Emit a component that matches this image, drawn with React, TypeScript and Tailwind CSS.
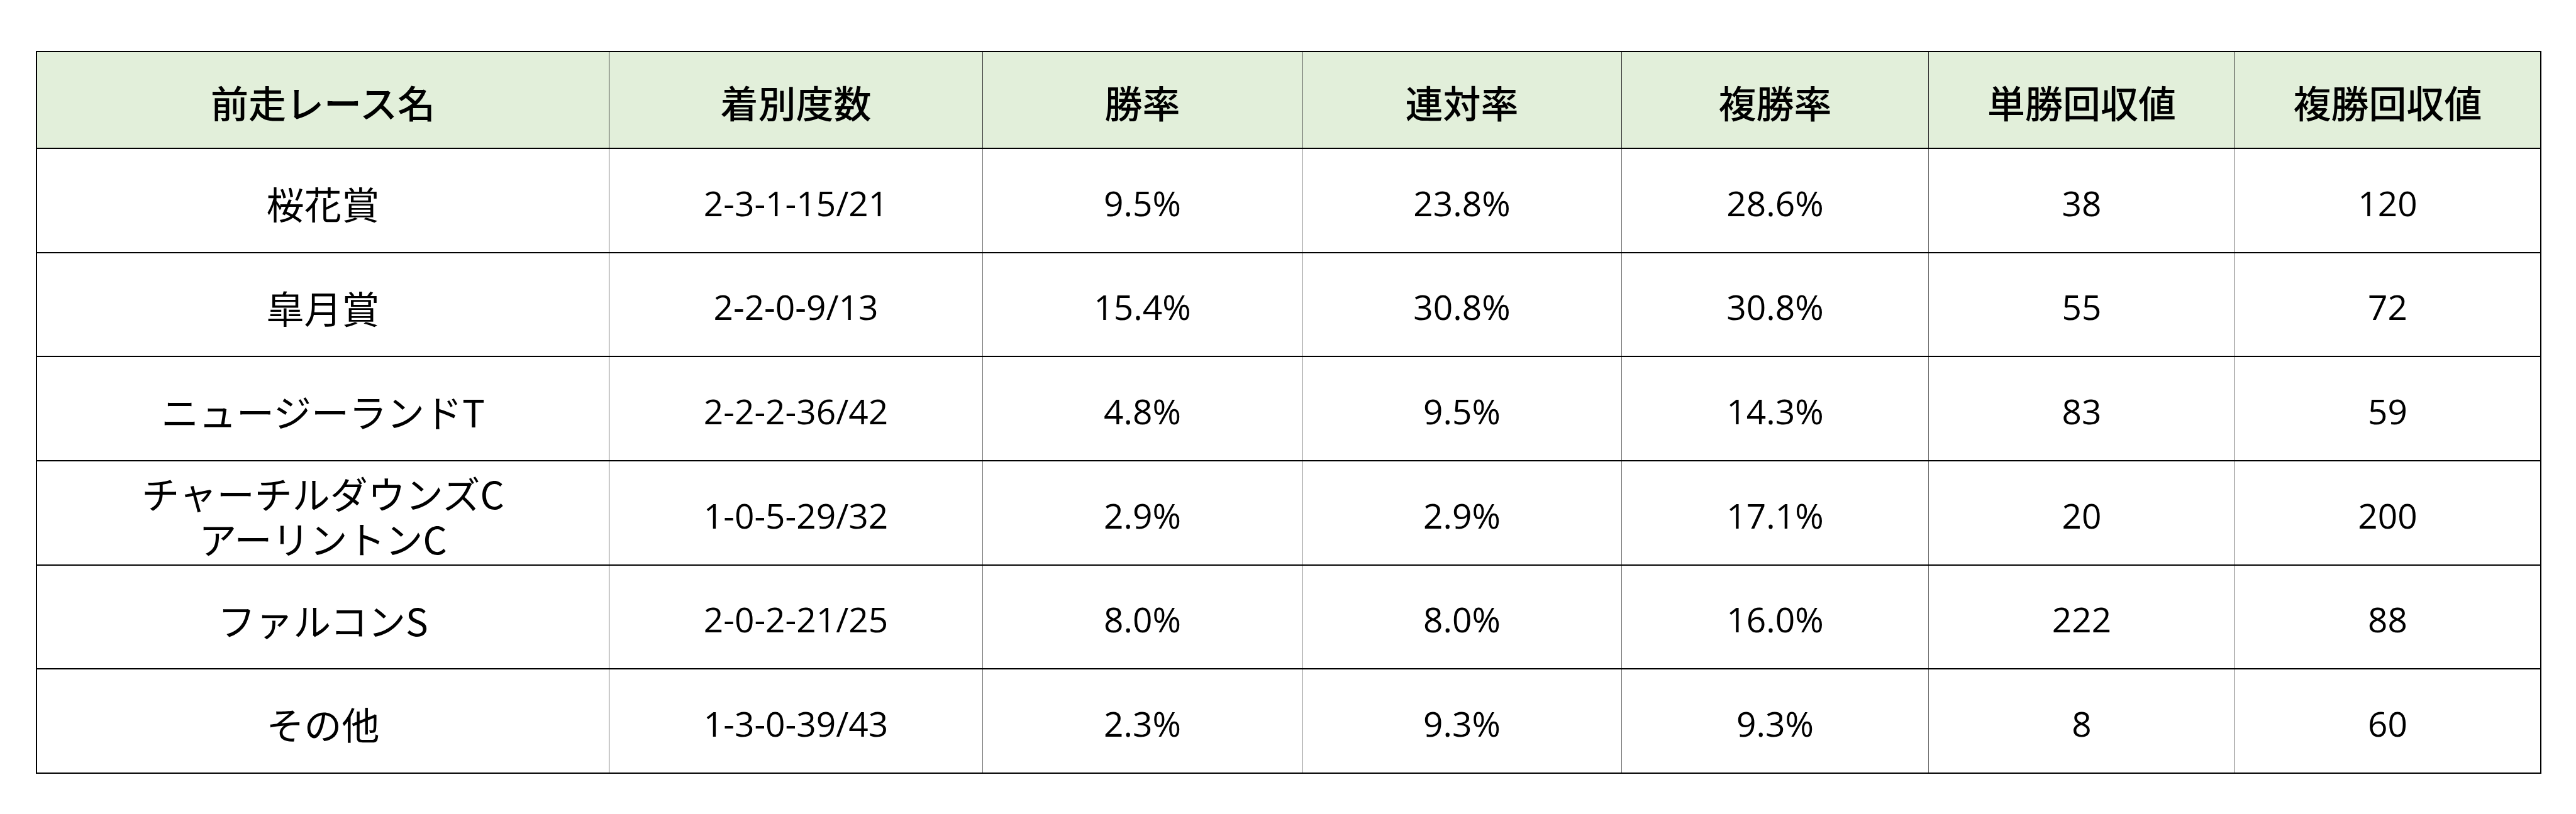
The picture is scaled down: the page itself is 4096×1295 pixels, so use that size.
const headers = ["前走レース名", "着別度数", "勝率", "連対率", "複勝率", "単勝回収値", "複勝回収値"];

const rows: string[][] = [
  ["桜花賞", "2-3-1-15/21", "9.5%", "23.8%", "28.6%", "38", "120"],
  ["皐月賞", "2-2-0-9/13", "15.4%", "30.8%", "30.8%", "55", "72"],
  ["ニュージーランドT", "2-2-2-36/42", "4.8%", "9.5%", "14.3%", "83", "59"],
  ["チャーチルダウンズC\nアーリントンC", "1-0-5-29/32", "2.9%", "2.9%", "17.1%", "20", "200"],
  ["ファルコンS", "2-0-2-21/25", "8.0%", "8.0%", "16.0%", "222", "88"],
  ["その他", "1-3-0-39/43", "2.3%", "9.3%", "9.3%", "8", "60"],
];

// column widths, first one sits inside the outer border
const widths = ["w-[909px]", "w-[594px]", "w-[508px]", "w-[508px]", "w-[488px]", "w-[487px]", "w-[486px]"];

export default function App() {
  return (
    <div className="h-[1295px] w-full bg-white pl-[57px] pt-[81px]">
      <div className="flex h-[1150px] w-[3984px] flex-col border-2 border-black">
        <div className="flex h-[154px] border-b-2 border-black bg-[#e2efda]">
          {headers.map((h, i) => (
            <div
              key={h}
              className={`${widths[i]} flex items-center justify-center pt-[6px] font-['Noto_Sans_CJK_JP',sans-serif] text-[60px] font-medium leading-none text-black ${
                i > 0 ? "border-l border-[#303030]" : ""
              }`}
            >
              {h}
            </div>
          ))}
        </div>
        <div className="flex flex-1 flex-col">
          {rows.map((r, ri) => (
            <div key={ri} className={`flex flex-1 ${ri < rows.length - 1 ? "border-b-2 border-black" : ""}`}>
              {r.map((c, i) => (
                <div
                  key={i}
                  className={`${widths[i]} flex items-center justify-center pt-[8px] text-black ${
                    i > 0
                      ? "border-l border-[#6e6e6e] font-['Open_Sans',sans-serif] text-[55px]"
                      : "whitespace-pre-line text-center font-['Noto_Sans_CJK_JP',sans-serif] text-[60px] leading-[1.2]"
                  }`}
                >
                  {c}
                </div>
              ))}
            </div>
          ))}
        </div>
      </div>
    </div>
  );
}
